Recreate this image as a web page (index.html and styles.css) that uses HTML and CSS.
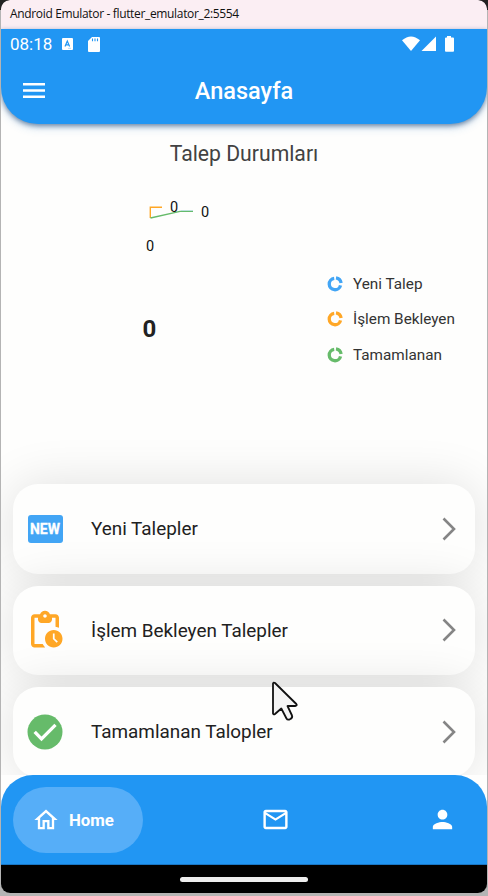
FILE: index.html
```html
<!DOCTYPE html>
<html lang="tr">
<head>
<meta charset="utf-8">
<title>Anasayfa</title>
<link rel="stylesheet" href="styles.css">
</head>
<body>
<div class="window">
  <div class="titlebar"><span>Android Emulator - flutter_emulator_2:5554</span></div>
  <div class="screen">
    <header class="header">
      <div class="status">
        <span class="clock">08:18</span>
        <svg class="kbd" width="11" height="12" viewBox="0 0 11 12"><rect width="11" height="12" rx="1" fill="#fff"/><path d="M3 8.5 5.3 3 7.6 8.5M3.7 6.8H6.9" fill="none" stroke="#2196f3" stroke-width="1.2"/><path d="M6 10.3h3" stroke="#9fcff8" stroke-width=".8"/></svg>
        <svg class="sd" width="12" height="15" viewBox="0 0 12 15"><path d="M4 0h7a1 1 0 0 1 1 1v13a1 1 0 0 1-1 1H1a1 1 0 0 1-1-1V4z" fill="#fff"/><path d="M4.500 1.500v2.700M7 1.500v2.700M9.500 1.500v2.700" stroke="#2196f3" stroke-width="1.100"/></svg>
        <svg class="signals" width="54" height="16" viewBox="0 0 54 16" fill="#fff"><path d="M0 4.300Q9-3.300 18 4.300L9 15z"/><path d="M19.500 15 34 .6V15z"/><path d="M45 0h4v1.500h2q1 0 1 1V15q0 .8-1 .8h-7q-1 0-1-.8V2.500q0-1 1-1h1z"/></svg>
      </div>
      <div class="appbar">
        <svg class="menu" width="22" height="15" viewBox="0 0 22 15"><path d="M0 1.300h22M0 7.500h22M0 13.700h22" stroke="#fff" stroke-width="2.400"/></svg>
        <h1>Anasayfa</h1>
      </div>
    </header>
    <main class="content">
      <h2>Talep Durumları</h2>
      <section class="summary">
        <svg class="chart" width="300" height="260" viewBox="0 0 300 260">
          <path d="M149 27.200H137.300V38" fill="none" stroke="#ffa726" stroke-width="1.400"/>
          <path d="M137.500 38 167 31.400H180" fill="none" stroke="#66bb6a" stroke-width="1.300"/>
          <path d="M168 30.600h12" stroke="#42a5f5" stroke-width=".2"/>
          <text class="value" x="161" y="32">0</text>
          <text class="value" x="192" y="36.500">0</text>
          <text class="value" x="137" y="71">0</text>
          <text class="total" x="136.500" y="157">0</text>
        </svg>
        <ul class="legend">
          <li class="blue"><svg viewBox="0 0 16 16"><path d="M7.200 2.400A5.700 5.700 0 1 0 13.500 9.300M9 1.900A6.200 6.200 0 0 1 14.100 7"/></svg>Yeni Talep</li>
          <li class="orange"><svg viewBox="0 0 16 16"><path d="M7.200 2.400A5.700 5.700 0 1 0 13.500 9.300M9 1.900A6.200 6.200 0 0 1 14.100 7"/></svg>İşlem Bekleyen</li>
          <li class="green"><svg viewBox="0 0 16 16"><path d="M7.200 2.400A5.700 5.700 0 1 0 13.500 9.300M9 1.900A6.200 6.200 0 0 1 14.100 7"/></svg>Tamamlanan</li>
        </ul>
      </section>
      <section class="cards">
        <div class="card">
          <span class="icon"><span class="new">NEW</span></span>
          <span class="label">Yeni Talepler</span>
          <svg class="chevron" viewBox="0 0 14 24"><path d="M1.500 1.500 12 12 1.500 22.500"/></svg>
        </div>
        <div class="card">
          <svg class="icon" viewBox="0 0 24 24" fill="#ffa726"><path d="M17 12c-2.760 0-5 2.240-5 5s2.240 5 5 5 5-2.240 5-5-2.240-5-5-5zm1.650 7.350L16.500 17.200V14h1v2.790l1.850 1.850-.7.71zM18 3h-3.180C14.400 1.840 13.300 1 12 1s-2.400.84-2.820 2H6c-1.100 0-2 .9-2 2v15c0 1.100.9 2 2 2h6.110c-.59-.57-1.070-1.250-1.420-2H6V5h2v1c0 1.100.9 2 2 2h4c1.100 0 2-.9 2-2V5h2v5.080c.71.1 1.380.31 2 .6V5c0-1.100-.9-2-2-2zm-6 2c-.55 0-1-.45-1-1s.45-1 1-1 1 .45 1 1-.45 1-1 1z"/></svg>
          <span class="label">İşlem Bekleyen Talepler</span>
          <svg class="chevron" viewBox="0 0 14 24"><path d="M1.500 1.500 12 12 1.500 22.500"/></svg>
        </div>
        <div class="card">
          <svg class="icon" viewBox="0 0 24 24"><circle cx="12" cy="12" r="10" fill="#66bb6a"/><path d="m6.100 11.900 3.900 4 8-8" fill="none" stroke="#fff" stroke-width="1.900"/></svg>
          <span class="label">Tamamlanan Talopler</span>
          <svg class="chevron" viewBox="0 0 14 24"><path d="M1.500 1.500 12 12 1.500 22.500"/></svg>
        </div>
      </section>
    </main>
    <div class="navwrap">
      <nav class="nav">
        <div class="tab active">
          <svg width="28" height="28" viewBox="0 0 24 24" fill="#fff"><path d="m12 5.690 5 4.500V18h-2v-6H9v6H7v-7.810zM12 3 2 12h3v8h6v-6h2v6h6v-8h3z"/></svg>
          <span>Home</span>
        </div>
        <svg class="mail" width="29" height="29" viewBox="0 0 24 24" fill="#fff"><path d="M22 6c0-1.100-.9-2-2-2H4c-1.100 0-2 .9-2 2v12c0 1.100.9 2 2 2h16c1.100 0 2-.9 2-2zm-2 0-8 5-8-5zm0 12H4V8l8 5 8-5z"/></svg>
        <svg class="person" width="29" height="29" viewBox="0 0 24 24" fill="#fff"><path d="M12 12c2.210 0 4-1.790 4-4s-1.790-4-4-4-4 1.790-4 4 1.790 4 4 4zm0 2c-2.670 0-8 1.340-8 4v2h16v-2c0-2.660-5.330-4-8-4z"/></svg>
      </nav>
    </div>
    <div class="gesture"><i></i></div>
  </div>
</div>
<svg class="cursor" width="29" height="42" viewBox="0 0 29 42"><path d="M2 2.500V32.500Q2.500 34 4 33L10.300 27.500 15.500 37.500Q16.500 39.300 18.800 38.300 22 36.800 21 34.500L16.500 25H24.500Q26.500 24.500 25.300 23L4 2Q2.500 1 2 2.500z" fill="#f4f4f4" stroke="#111" stroke-width="1.800" stroke-linejoin="round"/></svg>
</body>
</html>
```

FILE: styles.css
```css
* { box-sizing: border-box; margin: 0; padding: 0; }
body {
  width: 488px;
  height: 896px;
  overflow: hidden;
  background: linear-gradient(#222 0 10px, #b4b4b4 10px);
  font-family: Roboto, sans-serif;
}
svg { display: block; flex: none; }
.window { height: 893px; margin: 0 1px; border-radius: 9px; overflow: hidden; background: #000; }
.titlebar {
  height: 29px;
  padding-left: 9px;
  background: #fbeef3;
  color: #111;
  font: 12px/28px "Open Sans", sans-serif;
  letter-spacing: -0.34px;
  border-radius: 8px 8px 0 0;
}
.screen { display: flex; flex-direction: column; height: 864px; background: #fefefd; }
.header {
  position: relative;
  height: 95px;
  flex: none;
  background: #2196f3;
  color: #fff;
  border-radius: 0 0 37px 37px;
  box-shadow: 0 2px 5px rgba(0, 40, 90, .5), 0 4px 10px rgba(33, 120, 200, .2);
}
.status { display: flex; align-items: center; height: 30px; padding-left: 9px; }
.clock { width: 52px; font-size: 17px; }
.sd { margin-left: 15px; }
.signals { margin: 0 31px 0 auto; }
.appbar { display: grid; grid-template-columns: 22px 1fr 22px; align-items: center; height: 63px; padding: 0 22px; }
h1 { text-align: center; font-size: 23.500px; font-weight: 500; }
.content { flex: 1; min-height: 0; overflow: hidden; }
h2 { height: 56px; padding-top: 4px; text-align: center; color: #424242; font-size: 21.200px; font-weight: 400; line-height: 52px; }
.summary { display: flex; height: 260px; padding-left: 12px; }
.legend { list-style: none; padding: 86px 0 0 14px; }
.legend li { display: flex; align-items: center; gap: 10px; height: 35.500px; font-size: 15.300px; color: #333; white-space: nowrap; }
.legend svg { width: 16px; height: 16px; fill: none; stroke: currentColor; stroke-width: 3.300; }
.legend .blue svg { color: #42a5f5; }
.legend .orange svg { color: #ffa726; }
.legend .green svg { color: #66bb6a; }
.value { font-size: 14.500px; text-anchor: middle; fill: #111; }
.total { font-size: 24px; font-weight: 700; text-anchor: middle; fill: #222; }
.cards { display: flex; flex-direction: column; gap: 12px; padding: 44px 12px 0; }
.card {
  display: flex;
  align-items: center;
  height: 89.500px;
  padding: 0 19px 0 11px;
  border-radius: 25px;
  background: #fefefd;
  box-shadow: 0 0 50px rgba(0, 0, 0, .12);
}
.icon { display: flex; align-items: center; justify-content: center; width: 42px; height: 42px; }
.new {
  width: 35px;
  height: 28px;
  border-radius: 3px;
  background: #42a5f5;
  color: #fff;
  text-align: center;
  font: 700 14px/28px Roboto, sans-serif;
  -webkit-text-stroke: .3px #fff;
}
.label { flex: 1; margin-left: 25px; font-size: 18.900px; color: #212121; }
.chevron { width: 14px; height: 24px; fill: none; stroke: #858585; stroke-width: 2.600; }
.navwrap { height: 90px; flex: none; background: #fefefd; }
.nav {
  display: flex;
  align-items: center;
  justify-content: space-between;
  height: 90px;
  padding: 0 30px 0 12px;
  background: #2196f3;
  border-bottom: 1px solid #1976c4;
  border-radius: 32px 32px 0 0;
}
.tab { display: flex; align-items: center; gap: 9px; width: 130px; height: 66px; padding-left: 19px; border-radius: 33px; background: #56aef8; color: #fff; font-size: 16.800px; font-weight: 700; }
.mail { margin-left: -20px; }
.gesture { display: flex; justify-content: center; align-items: center; height: 28px; flex: none; background: #000; }
.gesture i { width: 128px; height: 5px; border-radius: 3px; background: #eee; }
.cursor { position: absolute; left: 271px; top: 681px; }
```
